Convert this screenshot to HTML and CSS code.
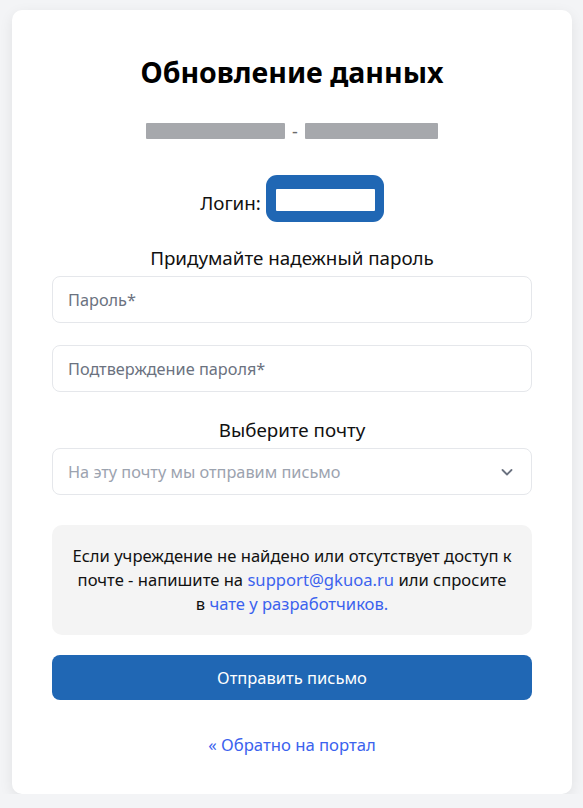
FILE: index.html
```html
<!DOCTYPE html>
<html lang="ru">
<head>
    <meta charset="UTF-8">
    <meta name="viewport" content="width=device-width, initial-scale=1.0">
    <title>Обновление данных</title>
    <link rel="stylesheet" href="styles.css">
</head>
<body>
    <div class="card">
        <h1 class="title">Обновление данных</h1>
        <div class="range">
            <span class="redacted redacted-left"></span>
            <span class="dash">-</span>
            <span class="redacted redacted-right"></span>
        </div>
        <div class="login">
            <span class="login-label">Логин:</span>
            <span class="login-badge"><span class="login-value"></span></span>
        </div>

        <form class="form">
            <div class="label">Придумайте надежный пароль</div>
            <input type="password" class="field" placeholder="Пароль*">
            <input type="password" class="field field-gap" placeholder="Подтверждение пароля*">

            <div class="label label-mail">Выберите почту</div>
            <div class="select">
                <span class="select-text">На эту почту мы отправим письмо</span>
                <svg class="chevron" width="16" height="16" viewBox="0 0 16 16" fill="none">
                    <path d="M3.5 6l4.5 4.5L12.5 6" stroke="#6b7280" stroke-width="1.8" stroke-linecap="round" stroke-linejoin="round"/>
                </svg>
            </div>

            <div class="notice">
                Если учреждение не найдено или отсутствует доступ к почте - напишите на <a href="#">support@gkuoa.ru</a> или спросите <span class="nowrap">в <a href="#">чате у разработчиков.</a></span>
            </div>

            <button type="submit" class="submit">Отправить письмо</button>
        </form>

        <a href="#" class="back">« Обратно на портал</a>
    </div>
</body>
</html>
```

FILE: styles.css
```css
body {
    margin: 0;
    background: #f3f4f6;
    font-family: "Noto Sans", "Open Sans", sans-serif;
    color: #111;
}
.card {
    box-sizing: border-box;
    width: 560px;
    height: 784px;
    margin: 10px 0 0 12px;
    padding: 42px 40px 0;
    background: white;
    border-radius: 10px;
    box-shadow: 0 4px 14px rgba(0, 0, 0, 0.08);
    text-align: center;
}
.title {
    margin: 0;
    font-size: 28.5px;
    font-weight: 700;
    line-height: 40px;
    color: #000;
}
.range {
    display: flex;
    justify-content: center;
    align-items: center;
    gap: 7px;
    margin-top: 27px;
    height: 24px;
}
.redacted {
    display: block;
    height: 16px;
    background: #a6a8ac;
    border-radius: 1px;
}
.redacted-left {
    width: 139px;
}
.redacted-right {
    width: 133px;
}
.dash {
    font-size: 18px;
    color: #6b6b6b;
}
.login {
    display: flex;
    justify-content: center;
    align-items: center;
    gap: 5px;
    margin-top: 32px;
    font-size: 18.8px;
}
.login-label {
    padding-top: 8px;
}
.login-badge {
    display: block;
    box-sizing: border-box;
    width: 118px;
    height: 47px;
    padding: 14px 9px 11px 10px;
    background: #2067b4;
    border-radius: 11px;
}
.login-value {
    display: block;
    height: 100%;
    background: white;
    border-radius: 1px;
}
.form {
    margin-top: 24px;
}
.label {
    font-size: 18.8px;
    line-height: 24px;
    margin-bottom: 6px;
}
.label-mail {
    margin-top: 26px;
}
.field, .select {
    display: flex;
    align-items: center;
    box-sizing: border-box;
    width: 100%;
    height: 47px;
    padding: 0 15px;
    border: 1px solid #e5e7eb;
    border-radius: 8px;
    font-family: inherit;
    font-size: 16.3px;
    background: white;
    outline: none;
}
.field::placeholder {
    color: #6b7280;
}
.field-gap {
    margin-top: 22px;
}
.select {
    justify-content: space-between;
    padding-right: 16px;
}
.select-text {
    color: #9ca3af;
}
.notice {
    margin-top: 30px;
    padding: 19px 16px;
    background: #f4f4f4;
    border-radius: 10px;
    font-size: 16.6px;
    line-height: 24px;
    color: #111;
}
.nowrap {
    white-space: nowrap;
}
.notice a, .back {
    color: #3b62ee;
    text-decoration: none;
}
.submit {
    display: block;
    width: 100%;
    height: 45px;
    margin-top: 20px;
    border: none;
    border-radius: 8px;
    background: #2067b4;
    color: white;
    font-family: inherit;
    font-size: 16.5px;
    cursor: pointer;
}
.back {
    display: inline-block;
    margin-top: 33px;
    font-size: 16.7px;
}
```
